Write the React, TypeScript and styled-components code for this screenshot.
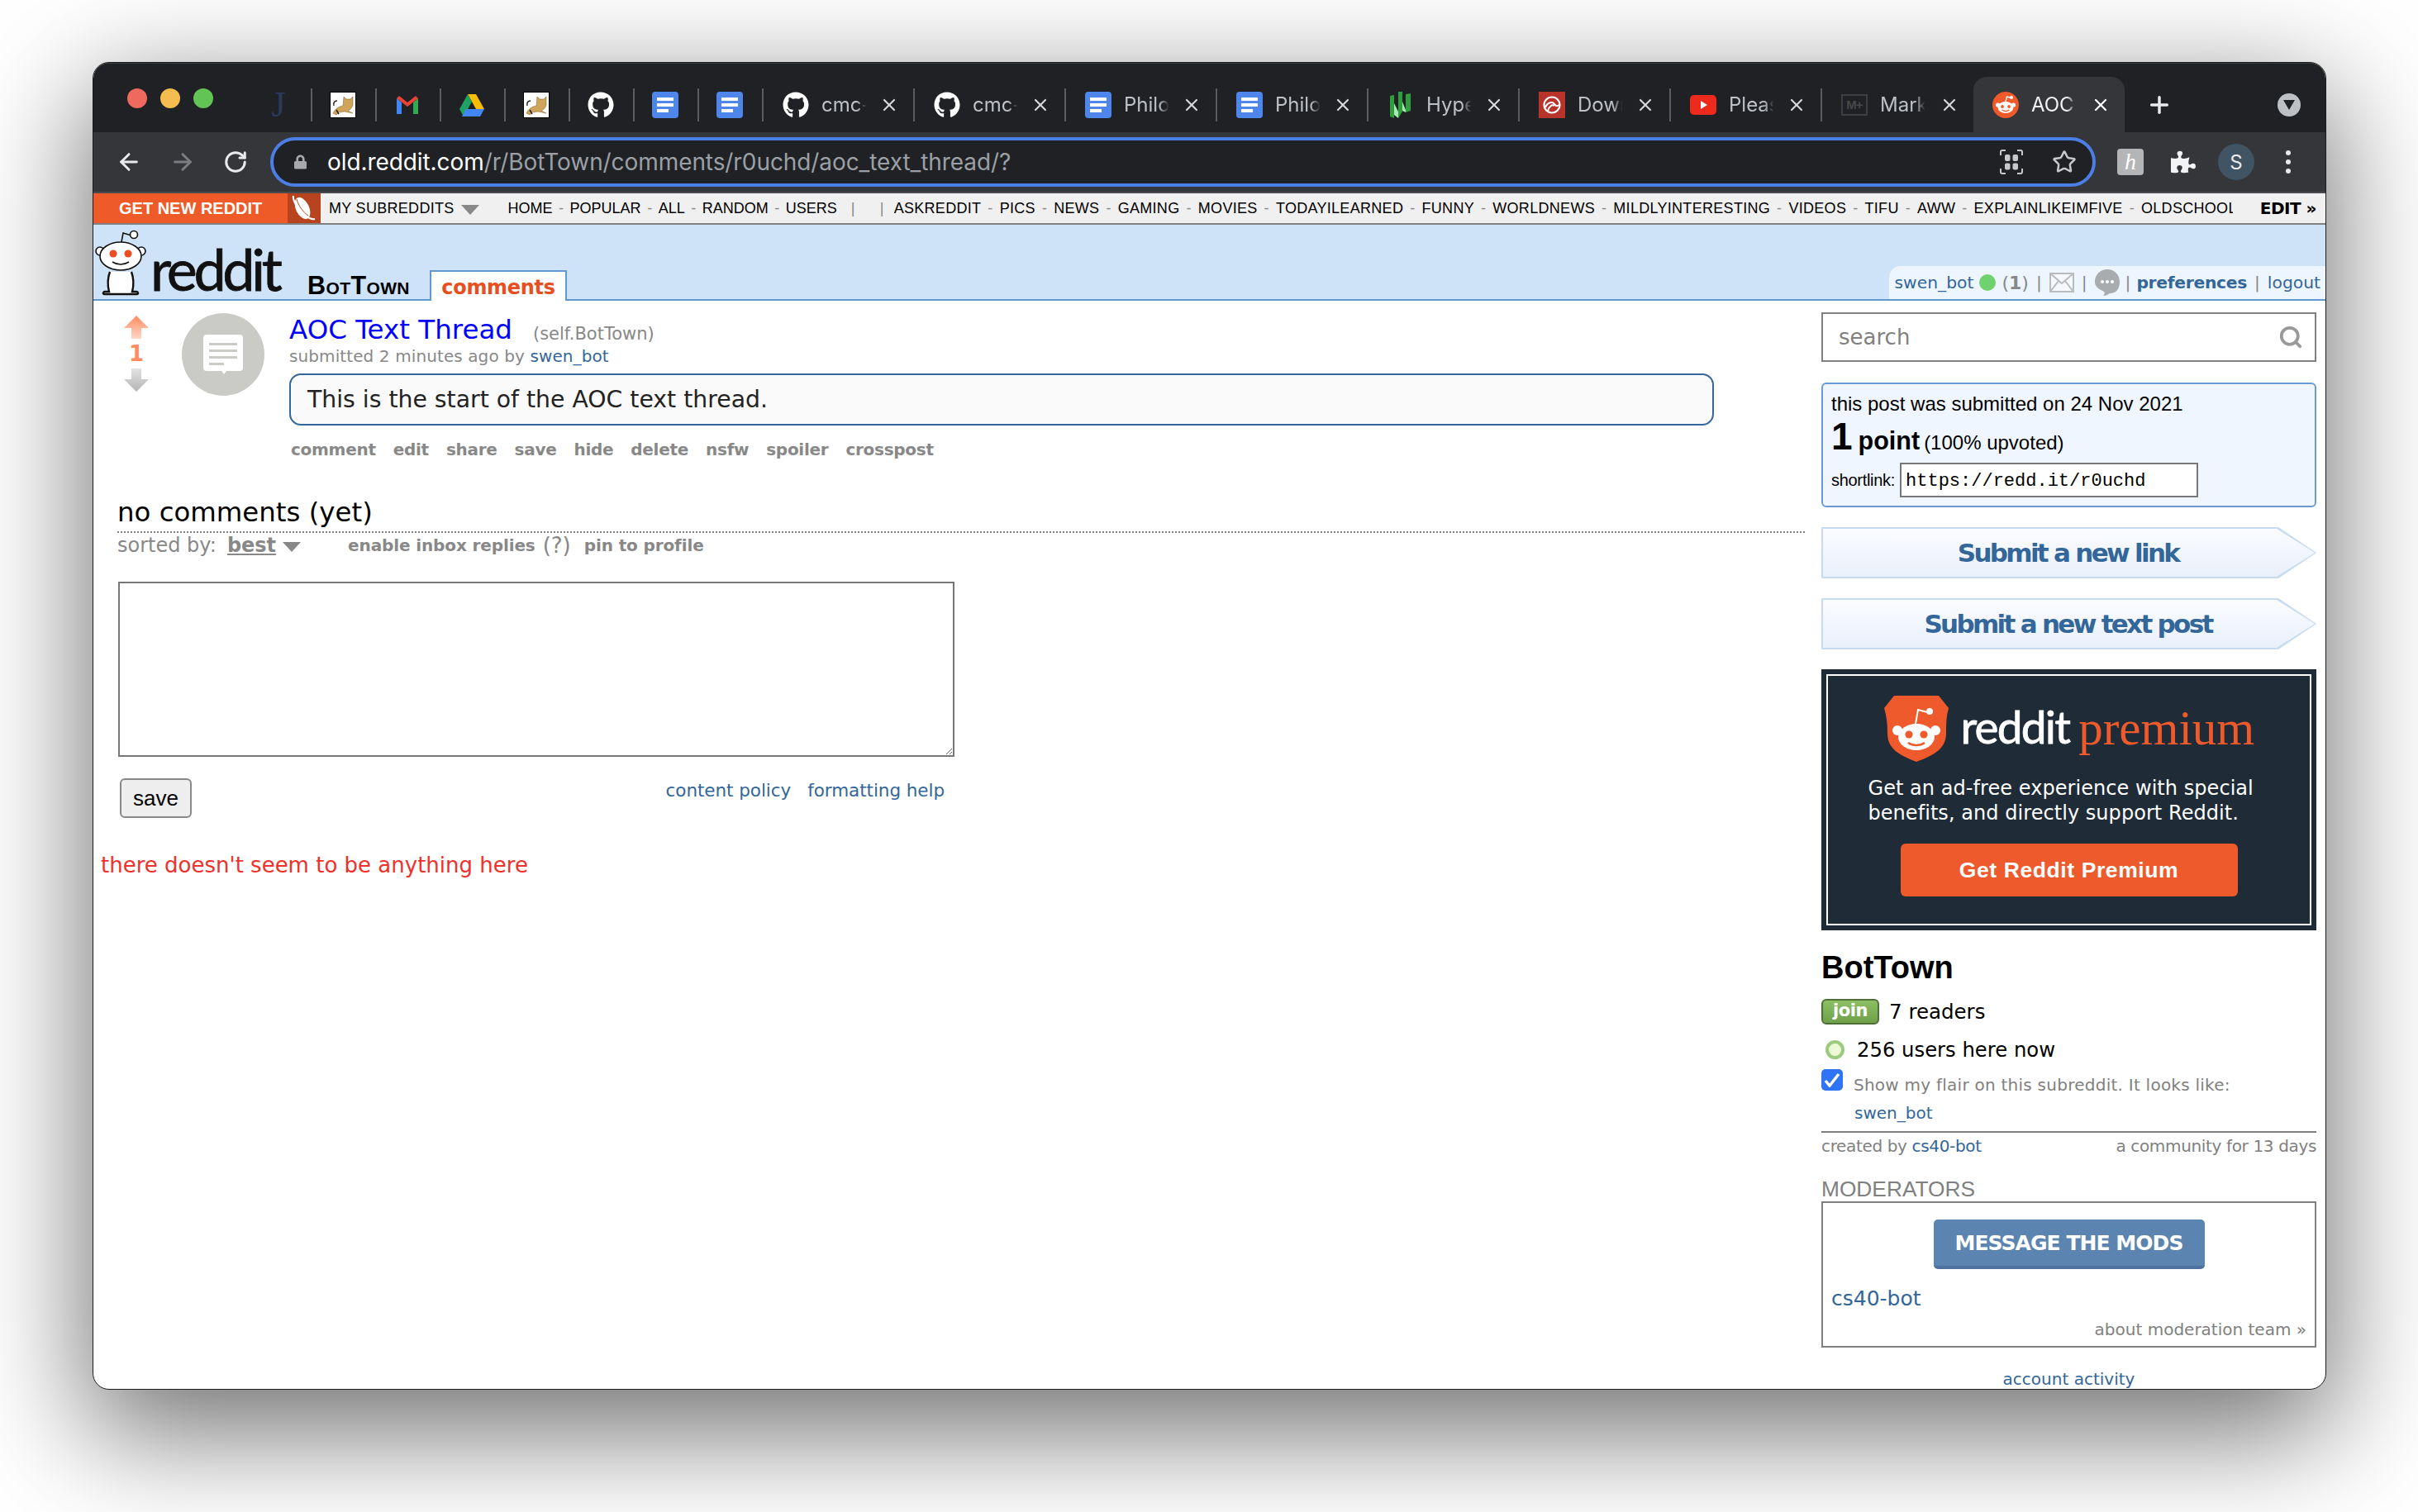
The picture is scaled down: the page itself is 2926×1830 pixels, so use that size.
import React from "react";
import styled, { createGlobalStyle } from "styled-components";
import { FaGithub, FaPuzzlePiece, FaLock } from "react-icons/fa";
import { ArrowLeft, ArrowRight, RotateCw, Star, Plus, X, Search } from "lucide-react";

const Global = createGlobalStyle`
  html, body { margin: 0; padding: 0; background: #fff; }
  body { width: 2926px; height: 1830px; overflow: hidden; font-family: "DejaVu Sans", sans-serif; }
`;
const V = `"DejaVu Sans", sans-serif`;
const A = `"Liberation Sans", Arial, sans-serif`;
const UI = `Inter, "Liberation Sans", sans-serif`;

const Stage = styled.div`
  width: 2926px; height: 1830px; box-sizing: border-box; padding: 75px 0 0 112px; background: #fff; overflow: hidden;
`;
const Win = styled.div`
  width: 2703px; height: 1607px; box-sizing: border-box; border: 1px solid #1c1c1c; border-radius: 20px; overflow: hidden;
  background: #fff; box-shadow: 0 44px 140px 8px rgba(0,0,0,.56); display: flex; flex-direction: column;
`;
const TabStrip = styled.div`
  height: 84px; flex: none; box-sizing: border-box; background: #202124; padding: 16px 0 0 41px; display: flex; align-items: center; border-top: 1px solid #3b3c40;
`;
const Lights = styled.div`display: flex; gap: 16px; margin-right: 42px; margin-top: -16px; flex: none;`;
const Light = styled.span<{ $c: string }>`width: 24px; height: 24px; border-radius: 50%; background: ${p => p.$c};`;
const Tab = styled.div<{ $w: number; $active?: boolean; $noSep?: boolean; $center?: boolean }>`
  width: ${p => p.$w}px; flex: none; box-sizing: border-box; display: flex; align-items: center;
  height: ${p => (p.$active ? 68 : 40)}px;
  padding: ${p => (p.$center ? "0 2px 0 0" : "0 17px 0 23px")};
  justify-content: ${p => (p.$center ? "center" : "flex-start")};
  border-right: ${p => (p.$noSep || p.$active ? "0" : "2px solid #5a5c60")};
  background: ${p => (p.$active ? "#35363a" : "transparent")};
  border-radius: ${p => (p.$active ? "16px 16px 0 0" : "0")};
`;
const TabLabel = styled.span<{ $active?: boolean }>`
  flex: none; width: 58px; margin: 0 auto 0 15px; white-space: nowrap; font: 400 24px ${UI};
  color: ${p => (p.$active ? "#f1f3f4" : "#bdc1c6")};
  -webkit-mask-image: linear-gradient(90deg, #000 74%, transparent 94%); mask-image: linear-gradient(90deg, #000 74%, transparent 94%);
`;
const Fav = styled.svg`width: 32px; height: 32px; flex: none; display: block;`;
const MdBox = styled.span`
  width: 32px; height: 26px; flex: none; box-sizing: border-box; border: 2px solid #3e3f42; color: #47484c; font: 700 15px ${A};
  display: flex; align-items: center; justify-content: center; letter-spacing: -1px;
`;
const CloseX = styled(X)<{ $active?: boolean }>`flex: none; width: 24px; height: 24px; color: ${p => (p.$active ? "#fff" : "#d5d7da")}; stroke-width: 2.2;`;
const NewTab = styled(Plus)`margin-left: 26px; width: 32px; height: 32px; color: #e8eaed; stroke-width: 2.6; flex: none;`;
const TabDrop = styled.span`
  margin-left: 127px; width: 28px; height: 28px; border-radius: 50%; background: #bdc1c6; display: flex; align-items: center; justify-content: center; flex: none;
  &::after { content: ""; border-style: solid; border-width: 12px 7px 0; border-color: #202124 transparent transparent; }
`;
const Toolbar = styled.div`height: 74px; flex: none; box-sizing: border-box; background: #35363a; display: flex; align-items: center; padding-left: 27px; border-bottom: 2px solid #4a4b4f;`;
const NavBtn = styled.span<{ $dim?: boolean; $m?: number }>`
  width: 32px; height: 32px; flex: none; margin-left: ${p => p.$m ?? 0}px; color: ${p => (p.$dim ? "#7b7d81" : "#e8eaed")};
  display: flex; align-items: center; justify-content: center;
`;
const Omni = styled.div`
  margin-left: 26px; width: 2209px; height: 60px; box-sizing: border-box; flex: none; background: #202124; border: 4px solid #4c7fe6; border-radius: 30px;
  display: flex; align-items: center; padding: 0 19px 0 25px;
`;
const LockIcon = styled(FaLock)`width: 15px; height: 18px; color: #a6a8ab; flex: none;`;
const Url = styled.div`flex: 1; margin-left: 25px; font: 400 28px ${UI}; color: #9aa0a6; letter-spacing: -0.08px; white-space: nowrap;`;
const UrlHost = styled.span`color: #fff;`;
const StarIcon = styled(Star)`width: 30px; height: 30px; color: #c6c8cb; margin-left: 34px; flex: none; stroke-width: 2;`;
const ExtH = styled.span`
  width: 32px; height: 32px; margin-left: 26px; border-radius: 4px; background: #b4b5b7; color: #fff; font: italic 400 28px "Liberation Serif", serif;
  display: flex; align-items: center; justify-content: center; flex: none;
`;
const Puzzle = styled(FaPuzzlePiece)`width: 30px; height: 30px; color: #f1f3f4; margin-left: 33px; flex: none;`;
const Avatar = styled.span`
  width: 44px; height: 44px; border-radius: 50%; background: #405463; color: #e8eaed; font: 400 24px ${UI}; margin-left: 27px; flex: none;
  display: flex; align-items: center; justify-content: center;
`;
const Dots = styled.span`
  margin-left: 38px; width: 6px; flex: none; display: flex; flex-direction: column; gap: 5px;
`;
const Dot = styled.span`width: 6px; height: 6px; border-radius: 50%; background: #e8eaed;`;

const SrBar = styled.div`
  height: 38px; flex: none; box-sizing: border-box; background: #f0f0f0; border-bottom: 2px solid #808080; display: flex; align-items: center; font: 400 18px ${A}; letter-spacing: .3px; color: #000; white-space: nowrap; overflow: hidden;
`;
const GetNew = styled.div`width: 235px; height: 36px; flex: none; box-sizing: border-box; background: #ee5a28; color: #fff; font: 700 20px ${A}; letter-spacing: 0; display: flex; align-items: center; padding-left: 31px;`;
const Planet = styled.div`width: 40px; height: 36px; flex: none; background: #b8441f; display: flex; align-items: center; justify-content: center;`;
const MySr = styled.span`margin-left: 10px; flex: none; display: flex; align-items: center;`;
const SrTri = styled.span`margin-left: 8px; margin-top: 3px; border-style: solid; border-width: 12px 11px 0; border-color: #888 transparent transparent;`;
const SrList = styled.div<{ $w?: number; $m: number; $tight?: boolean }>`
  display: flex; align-items: center; flex: none; margin-left: ${p => p.$m}px; width: ${p => (p.$w ? `${p.$w}px` : "auto")}; overflow: hidden;
  letter-spacing: ${p => (p.$tight ? "0" : ".3px")};
`;
const SrSep = styled.span<{ $tight?: boolean }>`color: #888; margin: 0 ${p => (p.$tight ? 7.5 : 8)}px;`;
const SrBarSep = styled.span<{ $m: number }>`color: #888; margin-left: ${p => p.$m}px; flex: none;`;
const SrEdit = styled.span`margin-left: auto; margin-right: 11px; font: 700 20px ${V}; letter-spacing: -.5px; flex: none;`;

const Head = styled.div`
  height: 92px; flex: none; box-sizing: border-box; background: #cee3f8; border-bottom: 2px solid #5f99cf; display: flex; align-items: flex-end;
`;
const LogoSnoo = styled.svg`width: 62px; height: 84px; margin: 0 0 4px 2px; flex: none; display: block;`;
const LogoWord = styled.span`font: 400 70px/66px Lato, ${A}; -webkit-text-stroke: .8px #111; color: #111; margin: 0 0 4px 5px; letter-spacing: -4.3px; flex: none; width: 160px;`;
const SrName = styled.span`font: 700 30.5px/30px ${A}; font-variant: small-caps; letter-spacing: .4px; color: #000; margin: 0 0 2px 30px; flex: none; width: 128px;`;
const CommentsTab = styled.span`
  margin: 0 0 -2px 20px; height: 37px; box-sizing: border-box; width: 166px; background: #fff; border: 2px solid #5f99cf; border-bottom: 0; color: #e84f20; font: 700 24px/38px ${V};
  text-align: center; flex: none; letter-spacing: -0.3px;
`;
const UserBox = styled.div`
  margin-left: auto; height: 40px; box-sizing: border-box; background: #edf5fe; border-radius: 14px 0 0 0; display: flex; align-items: center; padding: 0 6px 0 7px; font: 400 20.3px ${V}; color: #369; flex: none;
`;
const OnlineDot = styled.span`width: 20px; height: 20px; border-radius: 50%; background: #6fd26f; margin: 0 7px; flex: none;`;
const Karma = styled.span`color: #888; font-size: 22px; b { color: #888; }`;
const Pipe = styled.span<{ $m?: number }>`color: #888; margin: 0 ${p => p.$m ?? 9}px;`;
const PrefLink = styled.span`font-weight: 700; letter-spacing: -.3px;`;

const Body = styled.div`flex: 1; min-height: 0; display: flex;`;
const Main = styled.div`flex: 1; min-width: 0;`;
const Post = styled.div`display: flex; padding-left: 37px; height: 193px; box-sizing: border-box;`;
const Vote = styled.div`width: 30px; margin-top: 18px; display: flex; flex-direction: column; align-items: center; flex: none;`;
const VoteNum = styled.span`font: 700 26px/36px ${V}; color: #ff8b60; height: 36px;`;
const Thumb = styled.div`
  width: 100px; height: 100px; border-radius: 50%; background: #cacbc6; margin: 15px 0 0 40px; flex: none; display: flex; align-items: center; justify-content: center;
`;
const Entry = styled.div`margin-left: 30px; width: 1724px; flex: none; padding-top: 15px;`;
const TitleRow = styled.div`height: 40px; display: flex; align-items: center; white-space: nowrap;`;
const TitleLink = styled.span`font: 400 32.5px/40px ${V}; color: #00f;`;
const Domain = styled.span`font: 400 21px/40px ${V}; color: #888; margin: 9px 0 0 25px;`;
const Tagline = styled.div`height: 24px; font: 400 20px/24px ${V}; color: #888; letter-spacing: .1px; margin-bottom: 1px;`;
const Blue = styled.span`color: #369;`;
const UserText = styled.div`
  margin-top: 9px; height: 63px; box-sizing: border-box; border: 2px solid #369; border-radius: 14px; background: #fafafa; padding: 0 0 0 20px; font: 400 28.3px/59px ${V}; color: #222;
`;
const Actions = styled.div`margin-top: 17px; height: 24px; display: flex; gap: 21px; padding-left: 2px; font: 700 20px/24px ${V}; color: #888; letter-spacing: -.28px;`;
const Comments = styled.div`margin-left: 29px; width: 2042px;`;
const NoComments = styled.div`margin-top: 43px; height: 40px; font: 400 32.4px/40px ${V}; color: #000;`;
const Dotted = styled.div`margin-top: 3px; border-top: 2px dotted #808080;`;
const SortRow = styled.div`margin-top: 1px; height: 28px; display: flex; align-items: center; color: #888; font: 400 24px/28px ${V}; white-space: nowrap;`;
const SortBest = styled.span`font-weight: 700; text-decoration: underline; margin-left: 13px;`;
const SortTri = styled.span`margin: 3px 0 0 8px; border-style: solid; border-width: 12px 11px 0; border-color: #888 transparent transparent;`;
const SortSmall = styled.span<{ $b?: boolean; $m: number; $big?: boolean }>`
  margin-left: ${p => p.$m}px; font-weight: ${p => (p.$b ? 700 : 400)}; font-size: ${p => (p.$big ? 26 : 20)}px; letter-spacing: ${p => (p.$b ? "-.12px" : "0")};
`;
const Editor = styled.textarea`
  display: block; margin: 30px 0 0 1px; width: 1012px; height: 212px; box-sizing: border-box; border: 2px solid #777; background: #fff; resize: both; outline: none; border-radius: 0;
`;
const SaveRow = styled.div`margin: 26px 0 0 3px; width: 998px; height: 48px; display: flex; justify-content: space-between; align-items: flex-start;`;
const SaveBtn = styled.button`
  width: 87px; height: 48px; box-sizing: border-box; border: 2px solid #888; border-radius: 6px; background: #eee; font: 400 26px ${A}; color: #000; padding: 0;
`;
const HelpLinks = styled.div`display: flex; gap: 20px; height: 30px; font: 400 21.5px/30px ${V}; color: #369; letter-spacing: -.06px;`;
const Empty = styled.div`margin: 39px 0 0 9px; height: 36px; font: 400 26px/36px ${V}; color: #f0302a;`;

const Side = styled.div`width: 599px; margin: 14px 11px 0 0; flex: none;`;
const SearchBox = styled.div`
  height: 60px; box-sizing: border-box; border: 2px solid #808080; display: flex; align-items: center; justify-content: space-between; padding: 0 14px 0 19px; font: 400 26px ${V}; color: #808080;
`;
const SearchIcon = styled(Search)`width: 30px; height: 30px; color: #999; stroke-width: 3;`;
const Info = styled.div`
  margin-top: 25px; height: 151px; box-sizing: border-box; border: 2px solid #6a9bd0; border-radius: 6px; background: #f0f6ff; padding: 9px 0 0 10px; font-family: ${A}; color: #000;
`;
const InfoDate = styled.div`font-size: 24px; line-height: 30px; height: 30px;`;
const InfoScore = styled.div`display: flex; align-items: baseline; height: 48px; line-height: 48px; font-size: 24px; white-space: pre;`;
const ScoreNum = styled.span`font-size: 46px; font-weight: 700;`;
const ScoreWord = styled.span`font-size: 30.5px; font-weight: 700; margin: 0 5px 0 7px;`;
const ShortRow = styled.div`margin-top: 8px; display: flex; align-items: center; font-size: 20px; letter-spacing: -.3px;`;
const ShortInput = styled.div`
  margin-left: 6px; width: 361px; height: 42px; box-sizing: border-box; border: 2px solid #777; background: #fff; padding-left: 5px; font: 400 22px/42px "Liberation Mono", monospace; letter-spacing: 0;
`;
const SubmitOuter = styled.div<{ $m: number }>`
  margin-top: ${p => p.$m}px; height: 62px; background: #c6daf0; clip-path: polygon(0 0, 553px 0, 100% 50%, 553px 100%, 0 100%); padding: 2px;  box-sizing: border-box;
`;
const SubmitInner = styled.div`
  height: 58px; background: linear-gradient(#fbfcff, #e9f0fb); clip-path: polygon(0 0, 549px 0, 100% 50%, 549px 100%, 0 100%);
  display: flex; align-items: center; justify-content: center; font: 700 31px ${V}; color: #369; letter-spacing: -2.7px; padding-right: 2px;
`;
const Premium = styled.div`margin-top: 24px; height: 316px; box-sizing: border-box; background: #1f2b37; padding: 6px;`;
const PremiumInner = styled.div`height: 304px; box-sizing: border-box; border: 2px solid #fff; display: flex; flex-direction: column; align-items: center; color: #fff;`;
const PremiumLogo = styled.div`margin: 24px 0 0 0; height: 80px; display: flex; align-items: center; width: 448px; flex: none;`;
const Shield = styled.svg`width: 78px; height: 80px; flex: none; display: block;`;
const PWord = styled.span`font: 400 55px/70px Lato, ${A}; -webkit-text-stroke: .8px #fff; color: #fff; margin: 0 0 6px 15px; letter-spacing: -1.8px;`;
const PWord2 = styled.span`font: 400 59px/70px "Liberation Serif", serif; color: #ee5a2b; margin: 0 0 2px 11px;`;
const PText = styled.div`margin-top: 17px; width: 486px; font: 400 24px/30px ${V}; letter-spacing: .05px; white-space: nowrap; height: 60px; flex: none;`;
const PBtn = styled.div`
  margin-top: 22px; width: 408px; height: 64px; border-radius: 6px; background: #ee5a2b; font: 700 26.5px/64px ${A}; text-align: center; letter-spacing: .6px; flex: none;
`;
const SrTitle = styled.div`margin-top: 23px; height: 44px; font: 700 38px/44px ${A}; color: #000;`;
const JoinRow = styled.div`margin-top: 16px; height: 31px; display: flex; align-items: center; font: 400 24.5px ${V}; color: #000;`;
const Join = styled.span`
  width: 70px; height: 31px; box-sizing: border-box; border: 2px solid #4f7138; border-radius: 6px; background: linear-gradient(#8cc063, #6fa04a); color: #fff; font: 700 21px/25px ${V}; text-align: center; margin-right: 12px; letter-spacing: -.5px;
`;
const OnlineRow = styled.div`margin-top: 17px; height: 26px; display: flex; align-items: center; font: 400 24.3px ${V}; color: #000; padding-left: 5px;`;
const Ring = styled.span`width: 23px; height: 23px; box-sizing: border-box; border-radius: 50%; background: #edf9d6; border: 4px solid #9ccb7e; margin-right: 15px; flex: none;`;
const FlairRow = styled.div`margin-top: 11px; height: 38px; display: flex; align-items: flex-start;`;
const Check = styled.span`width: 26px; height: 26px; border-radius: 5px; background: #2f74f5; display: flex; align-items: center; justify-content: center; flex: none;`;
const FlairText = styled.span`margin-left: 13px; font: 400 20px/38px ${V}; color: #808080; letter-spacing: .25px; white-space: nowrap;`;
const FlairName = styled.div`height: 30px; padding-left: 40px; font: 400 20px/30px ${V}; color: #369;`;
const Rule = styled.div`margin-top: 7px; border-top: 2px solid #808080;`;
const Created = styled.div`height: 32px; display: flex; justify-content: space-between; font: 400 20px/32px ${V}; color: #808080; letter-spacing: -.35px;`;
const ModHead = styled.div`margin-top: 21px; height: 30px; font: 400 26.3px/30px ${A}; color: #808080;`;
const ModBox = styled.div`height: 177px; box-sizing: border-box; border: 2px solid #808080; padding-top: 20px;`;
const ModBtn = styled.div`
  margin: 0 auto; width: 328px; height: 60px; box-sizing: border-box; border-radius: 5px; background: #5c84b1; border-bottom: 4px solid #4e72a0; color: #fff; font: 700 25px/58px ${V}; text-align: center; letter-spacing: -.95px;
`;
const ModName = styled.div`margin: 18px 0 0 10px; height: 36px; font: 400 25px/36px ${V}; color: #369;`;
const ModAbout = styled.div`margin: 4px 10px 0 0; height: 30px; font: 400 20px/30px ${V}; color: #808080; text-align: right;`;
const Activity = styled.div`margin-top: 23px; height: 30px; font: 400 20px/30px ${V}; color: #369; text-align: center;`;

const Docs = () => (
  <Fav viewBox="0 0 32 32"><rect x="0" y="0" width="32" height="32" rx="4" fill="#4f86ec" /><path fill="#fff" d="M6 7h20v4H6zM6 14h20v4H6zM6 21h14v4H6z" /></Fav>
);
const Cat = () => (
  <Fav viewBox="0 0 32 32"><rect x=".5" y=".5" width="31" height="31" fill="#fff" stroke="#000" /><path d="M4 26c3-6 7-8 12-9l1-11 3 3h5l3-3 0 10c-2 6-5 6-6 7l6 3-10-2-7 1-3 3z" fill="#d0a45a" stroke="#7b5a24" strokeWidth=".5" /><path d="M9 11c-3 0-5 2-4 6M8 22l3 5" stroke="#222" strokeWidth="1.5" fill="none" /></Fav>
);
const Gmail = () => (
  <Fav viewBox="0 0 32 32"><path d="M3 8v19h6V13z" fill="#4285f4" /><path d="M23 13v14h6V8z" fill="#34a853" /><path d="M3 8l13 10L29 8l-3-3-10 8L6 5z" fill="#ea4335" /></Fav>
);
const Drive = () => (
  <Fav viewBox="0 0 32 32"><path d="M11 3h10l10 18H21z" fill="#fbbc04" /><path d="M11 3l5 9-10 18-5-9z" fill="#1ea362" /><path d="M9 21h22l-5 9H4z" fill="#4285f4" /></Fav>
);
const Hype = () => (
  <Fav viewBox="0 0 32 32"><path d="M3 5l5-1v28l-5-2zM13 0h5v24l-5 8zM22 3l6-1v21l-6 2z" fill="#2f9e3c" /><path d="M8 14l5 10v8l-5-4zM18 12l4 10v3l-4-2z" fill="#a9e9b2" /></Fav>
);
const Adobe = () => (
  <Fav viewBox="0 0 32 32"><rect width="32" height="32" fill="#b8342b" /><circle cx="16" cy="16" r="9.5" fill="none" stroke="#fff" strokeWidth="2.2" /><path d="M8 19c3-7 9-7 11-4s5 3 6 0M11 24c1-6 5-9 8-7" fill="none" stroke="#fff" strokeWidth="2" /></Fav>
);
const YT = () => (
  <Fav viewBox="0 0 32 32"><rect y="4" width="32" height="24" rx="5" fill="#ee2a1c" /><path d="M13 11l8 5-8 5z" fill="#fff" /></Fav>
);
const RedditFav = () => (
  <Fav viewBox="0 0 32 32">
    <circle cx="16" cy="16" r="16" fill="#ee5a2b" />
    <ellipse cx="16" cy="19" rx="9.5" ry="7" fill="#fff" /><circle cx="6.5" cy="16" r="2.6" fill="#fff" /><circle cx="25.5" cy="16" r="2.6" fill="#fff" />
    <circle cx="12" cy="18" r="1.9" fill="#ee5a2b" /><circle cx="20" cy="18" r="1.9" fill="#ee5a2b" />
    <path d="M11.5 22c3 2 6 2 9 0" stroke="#ee5a2b" strokeWidth="1.4" fill="none" /><path d="M16 12l1.5-6 5 1.2" stroke="#fff" strokeWidth="1.4" fill="none" /><circle cx="23" cy="7" r="2" fill="#fff" />
  </Fav>
);
const GH = styled(FaGithub)`width: 32px; height: 32px; color: #fff; flex: none; background: radial-gradient(circle, #202124 55%, transparent 56%);`;
const JIcon = styled.span`width: 100%; text-align: center; font: 400 44px/40px "Liberation Serif", serif; color: #2a3a5c;`;

const simple: [React.ReactNode][] = [[<Cat />], [<Gmail />], [<Drive />], [<Cat />], [<GH />], [<Docs />], [<Docs />]];
const wide: [React.ReactNode, string][] = [
  [<GH />, "cmc-"], [<GH />, "cmc-"], [<Docs />, "Philo"], [<Docs />, "Philo"], [<Hype />, "Hype"], [<Adobe />, "Down"], [<YT />, "Pleas"], [<MdBox>M+</MdBox>, "Mark"],
];

const LinksA = ["HOME", "POPULAR", "ALL", "RANDOM", "USERS"];
const LinksB = ["ASKREDDIT", "PICS", "NEWS", "GAMING", "MOVIES", "TODAYILEARNED", "FUNNY", "WORLDNEWS", "MILDLYINTERESTING", "VIDEOS", "TIFU", "AWW", "EXPLAINLIKEIMFIVE", "OLDSCHOOL"];
const ActionList = ["comment", "edit", "share", "save", "hide", "delete", "nsfw", "spoiler", "crosspost"];

const joinSep = (items: string[], tight?: boolean) => items.map((t, i) => (
  <React.Fragment key={t}>{i > 0 && <SrSep $tight={tight}>-</SrSep>}<span>{t}</span></React.Fragment>
));

const SnooFace = () => (
  <g>
    <path d="M31 24l3-16 10 3" stroke="#111" strokeWidth="1.6" fill="none" />
    <circle cx="47" cy="10" r="4.5" fill="#fff" stroke="#111" strokeWidth="1.6" />
    <circle cx="6" cy="30" r="5" fill="#fff" stroke="#111" strokeWidth="1.6" />
    <circle cx="56" cy="30" r="5" fill="#fff" stroke="#111" strokeWidth="1.6" />
    <ellipse cx="31" cy="36" rx="25" ry="17" fill="#fff" stroke="#111" strokeWidth="1.6" />
    <circle cx="22" cy="33" r="4.5" fill="#ee4b1e" /><circle cx="40" cy="33" r="4.5" fill="#ee4b1e" />
    <path d="M21 43c6 4 14 4 20 0" stroke="#111" strokeWidth="1.6" fill="none" />
    <path d="M18 55c-3 8-3 16-1 24h-5c-2 0-3 3-1 3h40c2 0 1-3-1-3h-5c2-8 2-16-1-24" fill="#fff" stroke="#111" strokeWidth="2.4" />
  </g>
);

export default function App() {
  return (
    <Stage>
      <Global />
      <Win>
        <TabStrip>
          <Lights><Light $c="#ee6a5f" /><Light $c="#f5bd4f" /><Light $c="#61c454" /></Lights>
          <Tab $w={78} $center><JIcon>J</JIcon></Tab>
          {simple.map(([ic], i) => <Tab key={i} $w={78} $center>{ic}</Tab>)}
          {wide.map(([ic, t], i) => (
            <Tab key={i} $w={183} $noSep={i === wide.length - 1}>{ic}<TabLabel>{t}</TabLabel><CloseX /></Tab>
          ))}
          <Tab $w={183} $active><RedditFav /><TabLabel $active>AOC</TabLabel><CloseX $active /></Tab>
          <NewTab />
          <TabDrop />
        </TabStrip>
        <Toolbar>
          <NavBtn><ArrowLeft size={34} strokeWidth={2.2} /></NavBtn>
          <NavBtn $dim $m={33}><ArrowRight size={34} strokeWidth={2.2} /></NavBtn>
          <NavBtn $m={32}><RotateCw size={30} strokeWidth={2.4} /></NavBtn>
          <Omni>
            <LockIcon />
            <Url><UrlHost>old.reddit.com</UrlHost>/r/BotTown/comments/r0uchd/aoc_text_thread/?</Url>
            <svg width="30" height="32" viewBox="0 0 30 32" fill="none">
              <path stroke="#c6c8cb" strokeWidth="2" d="M2 8V4a2 2 0 0 1 2-2h4M22 2h4a2 2 0 0 1 2 2v4M28 24v4a2 2 0 0 1-2 2h-4M8 30H4a2 2 0 0 1-2-2v-4" />
              <rect x="7" y="7" width="6.5" height="8" rx="2" fill="#c6c8cb" /><rect x="16.5" y="7" width="6.5" height="8" rx="2" fill="#c6c8cb" />
              <rect x="7" y="17.5" width="6.5" height="8" rx="2" fill="#c6c8cb" /><rect x="16.5" y="17.5" width="6.5" height="8" rx="2" fill="#c6c8cb" />
            </svg>
            <StarIcon />
          </Omni>
          <ExtH>h</ExtH>
          <Puzzle />
          <Avatar>S</Avatar>
          <Dots><Dot /><Dot /><Dot /></Dots>
        </Toolbar>
        <SrBar>
          <GetNew>GET NEW REDDIT</GetNew>
          <Planet>
            <svg width="34" height="34" viewBox="0 0 34 34"><ellipse cx="15" cy="17" rx="8" ry="14" transform="rotate(-25 15 17)" fill="#fff" /><path d="M4 2c-2 8 16 30 26 28" stroke="#fff" strokeWidth="2" fill="none" /><path d="M8 6c2 8 8 16 14 20" stroke="#b8441f" strokeWidth="1" fill="none" /></svg>
          </Planet>
          <MySr>MY SUBREDDITS<SrTri /></MySr>
          <SrList $m={35} $tight>{joinSep(LinksA, true)}</SrList>
          <SrBarSep $m={17}>|</SrBarSep>
          <SrBarSep $m={30}>|</SrBarSep>
          <SrList $m={12} $w={1620}>{joinSep(LinksB)}</SrList>
          <SrEdit>EDIT »</SrEdit>
        </SrBar>
        <Head>
          <LogoSnoo viewBox="0 0 62 84"><SnooFace /></LogoSnoo>
          <LogoWord>reddit</LogoWord>
          <SrName>BotTown</SrName>
          <CommentsTab>comments</CommentsTab>
          <UserBox>
            <span>swen_bot</span><OnlineDot />
            <Karma>(<b>1</b>)</Karma><Pipe>|</Pipe>
            <svg width="30" height="24" viewBox="0 0 30 24"><rect x="1" y="1" width="28" height="22" fill="#f5f8fc" stroke="#b9bcbf" strokeWidth="2" /><path d="M1 1l14 12L29 1M1 23l10-13M29 23L19 10" stroke="#b9bcbf" strokeWidth="2" fill="none" /></svg>
            <Pipe>|</Pipe>
            <svg width="30" height="34" viewBox="0 0 30 34"><path d="M15 1c8 0 15 6 15 15s-5 14-11 14c-3 0-3 3-9 3 2-2 2-4 1-5C5 25 0 22 0 16 0 7 7 1 15 1z" fill="#a9acaf" /><circle cx="9" cy="16" r="2" fill="#fff" /><circle cx="15" cy="16" r="2" fill="#fff" /><circle cx="21" cy="16" r="2" fill="#fff" /></svg>
            <Pipe $m={7}>|</Pipe>
            <PrefLink>preferences</PrefLink><Pipe>|</Pipe><span>logout</span>
          </UserBox>
        </Head>
        <Body>
          <Main>
            <Post>
              <Vote>
                <svg width="30" height="28" viewBox="0 0 30 28"><defs><linearGradient id="u" x1="0" y1="0" x2="0" y2="1"><stop offset="0" stopColor="#ff8b60" /><stop offset="1" stopColor="#ffd7c6" /></linearGradient></defs><path d="M15 0l15 15h-9v13H9V15H0z" fill="url(#u)" /></svg>
                <VoteNum>1</VoteNum>
                <svg width="30" height="28" viewBox="0 0 30 28"><defs><linearGradient id="d" x1="0" y1="1" x2="0" y2="0"><stop offset="0" stopColor="#b4b4b4" /><stop offset="1" stopColor="#e2e2e2" /></linearGradient></defs><path d="M15 28L0 13h9V0h12v13h9z" fill="url(#d)" /></svg>
              </Vote>
              <Thumb>
                <svg width="50" height="50" viewBox="0 0 50 50"><path d="M5 1h40a4 4 0 0 1 4 4v36a4 4 0 0 1-4 4H29l-3 4-3-4H5a4 4 0 0 1-4-4V5a4 4 0 0 1 4-4z" fill="#fff" /><path d="M8 11h34v3H8zM8 19h34v3H8zM8 27h34v3H8zM8 35h18v3H8z" fill="#cacbc6" /></svg>
              </Thumb>
              <Entry>
                <TitleRow><TitleLink>AOC Text Thread</TitleLink><Domain>(self.BotTown)</Domain></TitleRow>
                <Tagline>submitted 2 minutes ago by <Blue>swen_bot</Blue></Tagline>
                <UserText>This is the start of the AOC text thread.</UserText>
                <Actions>{ActionList.map(a => <span key={a}>{a}</span>)}</Actions>
              </Entry>
            </Post>
            <Comments>
              <NoComments>no comments (yet)</NoComments>
              <Dotted />
              <SortRow>
                sorted by:<SortBest>best</SortBest><SortTri />
                <SortSmall $b $m={57}>enable inbox replies</SortSmall>
                <SortSmall $m={9} $big>(?)</SortSmall>
                <SortSmall $b $m={16}>pin to profile</SortSmall>
              </SortRow>
              <Editor aria-label="comment" />
              <SaveRow>
                <SaveBtn>save</SaveBtn>
                <HelpLinks><span>content policy</span><span>formatting help</span></HelpLinks>
              </SaveRow>
            </Comments>
            <Empty>there doesn't seem to be anything here</Empty>
          </Main>
          <Side>
            <SearchBox>search<SearchIcon /></SearchBox>
            <Info>
              <InfoDate>this post was submitted on 24 Nov 2021</InfoDate>
              <InfoScore><ScoreNum>1</ScoreNum><ScoreWord>point</ScoreWord>(100% upvoted)</InfoScore>
              <ShortRow>shortlink:<ShortInput>https://redd.it/r0uchd</ShortInput></ShortRow>
            </Info>
            <SubmitOuter $m={24}><SubmitInner>Submit a new link</SubmitInner></SubmitOuter>
            <SubmitOuter $m={24}><SubmitInner>Submit a new text post</SubmitInner></SubmitOuter>
            <Premium>
              <PremiumInner>
                <PremiumLogo>
                  <Shield viewBox="0 0 78 80">
                    <path d="M12 0h54l12 15c-3 10-3 20-3 30 0 18-12 26-36 35C15 71 4 63 4 45 4 35 3 25 0 15z" fill="#ee5a2b" />
                    <ellipse cx="39" cy="50" rx="22" ry="16" fill="#fff" /><circle cx="16" cy="42" r="6" fill="#fff" /><circle cx="62" cy="42" r="6" fill="#fff" />
                    <circle cx="30" cy="47" r="4.6" fill="#ee5a2b" /><circle cx="48" cy="47" r="4.6" fill="#ee5a2b" />
                    <path d="M29 57c6 4 14 4 20 0" stroke="#ee5a2b" strokeWidth="2.6" fill="none" />
                    <path d="M38 34l3-17 11 3" stroke="#fff" strokeWidth="2" fill="none" /><circle cx="55" cy="19" r="4" fill="#fff" />
                  </Shield>
                  <PWord>reddit</PWord>
                  <PWord2>premium</PWord2>
                </PremiumLogo>
                <PText>Get an ad-free experience with special<br />benefits, and directly support Reddit.</PText>
                <PBtn>Get Reddit Premium</PBtn>
              </PremiumInner>
            </Premium>
            <SrTitle>BotTown</SrTitle>
            <JoinRow><Join>join</Join>7 readers</JoinRow>
            <OnlineRow><Ring />256 users here now</OnlineRow>
            <FlairRow>
              <Check><svg width="20" height="18" viewBox="0 0 20 18"><path d="M2 10l5 6L18 2" stroke="#fff" strokeWidth="3.4" fill="none" /></svg></Check>
              <FlairText>Show my flair on this subreddit. It looks like:</FlairText>
            </FlairRow>
            <FlairName>swen_bot</FlairName>
            <Rule />
            <Created><span>created by <Blue>cs40-bot</Blue></span><span>a community for 13 days</span></Created>
            <ModHead>MODERATORS</ModHead>
            <ModBox>
              <ModBtn>MESSAGE THE MODS</ModBtn>
              <ModName>cs40-bot</ModName>
              <ModAbout>about moderation team »</ModAbout>
            </ModBox>
            <Activity>account activity</Activity>
          </Side>
        </Body>
      </Win>
    </Stage>
  );
}
